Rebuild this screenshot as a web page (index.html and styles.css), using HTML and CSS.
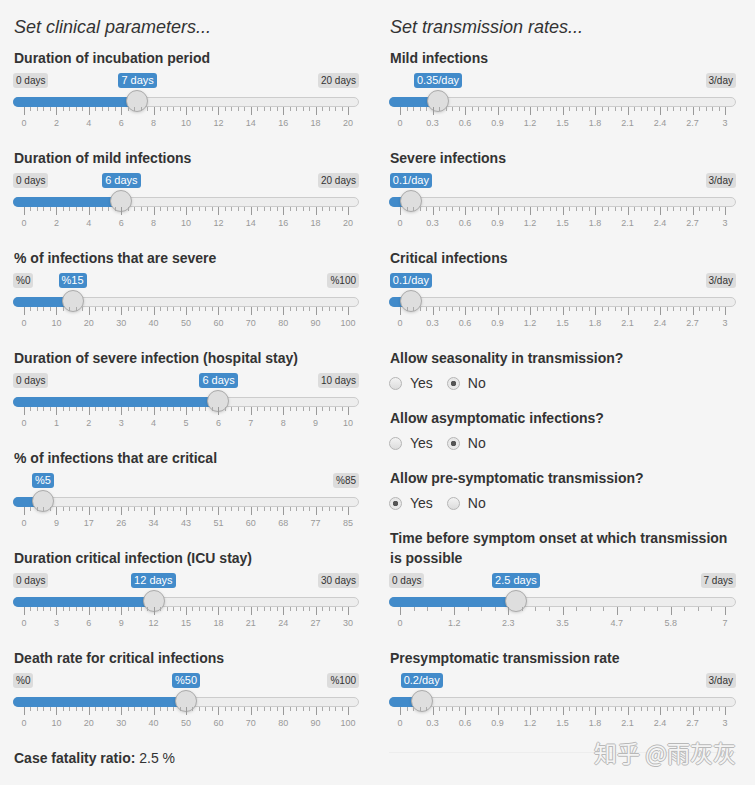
FILE: index.html
```html
<!DOCTYPE html>
<html lang="en">
<head>
    <meta charset="UTF-8">
    <title>Model parameters</title>
    <link rel="stylesheet" href="styles.css">
</head>
<body>

<div class="page">
    <!-- Clinical parameters -->
    <div class="col">
        <h4 class="col-title">Set clinical parameters...</h4>

        <div class="field">
            <label class="field-label">Duration of incubation period</label>
            <div class="irs" data-min="0" data-max="20" data-value="7" data-postfix=" days" data-grid="0,2,4,6,8,10,12,14,16,18,20"></div>
        </div>
        <div class="field">
            <label class="field-label">Duration of mild infections</label>
            <div class="irs" data-min="0" data-max="20" data-value="6" data-postfix=" days" data-grid="0,2,4,6,8,10,12,14,16,18,20"></div>
        </div>
        <div class="field">
            <label class="field-label">% of infections that are severe</label>
            <div class="irs" data-min="0" data-max="100" data-value="15" data-prefix="%" data-grid="0,10,20,30,40,50,60,70,80,90,100"></div>
        </div>
        <div class="field">
            <label class="field-label">Duration of severe infection (hospital stay)</label>
            <div class="irs" data-min="0" data-max="10" data-value="6" data-postfix=" days" data-grid="0,1,2,3,4,5,6,7,8,9,10"></div>
        </div>
        <div class="field">
            <label class="field-label">% of infections that are critical</label>
            <div class="irs" data-min="0" data-max="85" data-value="5" data-prefix="%" data-grid="0,9,17,26,34,43,51,60,68,77,85"></div>
        </div>
        <div class="field">
            <label class="field-label">Duration critical infection (ICU stay)</label>
            <div class="irs" data-min="0" data-max="30" data-value="12" data-postfix=" days" data-grid="0,3,6,9,12,15,18,21,24,27,30"></div>
        </div>
        <div class="field">
            <label class="field-label">Death rate for critical infections</label>
            <div class="irs" data-min="0" data-max="100" data-value="50" data-prefix="%" data-grid="0,10,20,30,40,50,60,70,80,90,100"></div>
        </div>

        <div class="cfr"><b>Case fatality ratio:</b> 2.5 %</div>
    </div>

    <!-- Transmission rates -->
    <div class="col">
        <h4 class="col-title">Set transmission rates...</h4>

        <div class="field">
            <label class="field-label">Mild infections</label>
            <div class="irs" data-min="0" data-max="3" data-value="0.35" data-postfix="/day" data-grid="0,0.3,0.6,0.9,1.2,1.5,1.8,2.1,2.4,2.7,3"></div>
        </div>
        <div class="field">
            <label class="field-label">Severe infections</label>
            <div class="irs" data-min="0" data-max="3" data-value="0.1" data-postfix="/day" data-grid="0,0.3,0.6,0.9,1.2,1.5,1.8,2.1,2.4,2.7,3"></div>
        </div>
        <div class="field">
            <label class="field-label">Critical infections</label>
            <div class="irs" data-min="0" data-max="3" data-value="0.1" data-postfix="/day" data-grid="0,0.3,0.6,0.9,1.2,1.5,1.8,2.1,2.4,2.7,3"></div>
        </div>

        <div class="field-radio">
            <label class="field-label">Allow seasonality in transmission?</label>
            <div class="radios">
                <span class="radio"></span><span class="radio-text">Yes</span>
                <span class="radio checked"></span><span class="radio-text">No</span>
            </div>
        </div>
        <div class="field-radio">
            <label class="field-label">Allow asymptomatic infections?</label>
            <div class="radios">
                <span class="radio"></span><span class="radio-text">Yes</span>
                <span class="radio checked"></span><span class="radio-text">No</span>
            </div>
        </div>
        <div class="field-radio">
            <label class="field-label">Allow pre-symptomatic transmission?</label>
            <div class="radios">
                <span class="radio checked"></span><span class="radio-text">Yes</span>
                <span class="radio"></span><span class="radio-text">No</span>
            </div>
        </div>

        <div class="field">
            <label class="field-label">Time before symptom onset at which transmission is possible</label>
            <div class="irs" data-min="0" data-max="7" data-value="2.5" data-postfix=" days" data-small="3" data-grid="0,1.2,2.3,3.5,4.7,5.8,7"></div>
        </div>
        <div class="field">
            <label class="field-label">Presymptomatic transmission rate</label>
            <div class="irs" data-min="0" data-max="3" data-value="0.2" data-postfix="/day" data-grid="0,0.3,0.6,0.9,1.2,1.5,1.8,2.1,2.4,2.7,3"></div>
        </div>

        <hr class="sep">
    </div>

    <div class="watermark">知乎 @雨灰灰</div>
</div>

<script>
// build the range sliders from their data attributes
document.querySelectorAll('.irs').forEach(function (el) {
    var min = +el.dataset.min;
    var max = +el.dataset.max;
    var val = +el.dataset.value;
    var pre = el.dataset.prefix || '';
    var post = el.dataset.postfix || '';
    var grid = el.dataset.grid.split(',');
    var small = el.dataset.small ? +el.dataset.small : 4;

    var w = el.clientWidth;
    var rail = w - 22;
    var x = 11 + (val - min) / (max - min) * rail;

    var html = '<span class="irs-line"></span>';
    html += '<span class="irs-bar" style="width:' + x + 'px"></span>';
    html += '<span class="irs-min">' + pre + min + post + '</span>';
    html += '<span class="irs-max">' + pre + max + post + '</span>';
    html += '<span class="irs-single">' + pre + val + post + '</span>';
    html += '<span class="irs-handle" style="left:' + (x - 11) + 'px"></span>';

    var n = grid.length - 1;
    var step = rail / n;
    html += '<span class="irs-grid">';
    for (var i = 0; i <= n; i++) {
        var gx = 11 + i * step;
        html += '<span class="irs-pol" style="left:' + gx + 'px"></span>';
        if (i < n) {
            for (var z = 1; z <= small; z++) {
                html += '<span class="irs-pol small" style="left:' + (gx + z * step / (small + 1)) + 'px"></span>';
            }
        }
        html += '<span class="irs-grid-text" style="left:' + gx + 'px">' + grid[i] + '</span>';
    }
    html += '</span>';
    el.innerHTML = html;

    // centre the value label on the handle, keep it inside the slider
    var single = el.querySelector('.irs-single');
    var sw = single.offsetWidth;
    var left = Math.max(0, Math.min(w - sw, x - sw / 2));
    single.style.left = left + 'px';

    var minLabel = el.querySelector('.irs-min');
    var maxLabel = el.querySelector('.irs-max');
    if (left < minLabel.offsetWidth + 3) minLabel.style.visibility = 'hidden';
    if (left + sw > w - maxLabel.offsetWidth - 3) maxLabel.style.visibility = 'hidden';
});
</script>

</body>
</html>
```

FILE: styles.css
```css
body {
    margin: 0;
    background-color: #f5f5f5;
    font-family: "Liberation Sans", Arial, sans-serif;
    font-size: 14px;
    line-height: 20px;
    color: #333;
}
.page {
    position: relative;
    display: grid;
    grid-template-columns: 346px 347px;
    column-gap: 30px;
    padding: 17px 0 0 13px;
    height: 785px;
    box-sizing: border-box;
    overflow: hidden;
}
.col-title {
    margin: 0 0 11px 1px;
    font-size: 18px;
    font-weight: normal;
    font-style: italic;
    line-height: 20px;
}
.field-label {
    display: block;
    margin-left: 1px;
    font-weight: bold;
}
.field {
    margin-bottom: 20px;
}

/* range slider */
.irs {
    position: relative;
    height: 58px;
    margin-top: 2px;
}
.irs-line {
    position: absolute;
    left: 0;
    right: 0;
    top: 27px;
    height: 8px;
    background-color: #ededed;
    border: 1px solid #cccccc;
    border-radius: 8px;
}
.irs-bar {
    position: absolute;
    left: 0;
    top: 27px;
    height: 10px;
    background-color: #428bca;
    border-radius: 8px 0 0 8px;
}
.irs-handle {
    position: absolute;
    top: 20px;
    width: 22px;
    height: 22px;
    box-sizing: border-box;
    background-color: #dedede;
    border: 1px solid #ababab;
    border-radius: 50%;
    box-shadow: 0 1px 3px rgba(0, 0, 0, 0.15);
}
.irs-min, .irs-max, .irs-single {
    position: absolute;
    top: 3px;
    padding: 1px 3px;
    border-radius: 3px;
    line-height: 13px;
    white-space: nowrap;
}
.irs-min, .irs-max {
    font-size: 10px;
    color: #333;
    background-color: rgba(0, 0, 0, 0.1);
}
.irs-min {
    left: 0;
}
.irs-max {
    right: 0;
}
.irs-single {
    font-size: 11px;
    color: #fff;
    background-color: #428bca;
}
.irs-grid {
    position: absolute;
    left: 0;
    right: 0;
    top: 37px;
    height: 20px;
}
.irs-pol {
    position: absolute;
    top: 0;
    width: 1px;
    height: 8px;
    background-color: #999;
}
.irs-pol.small {
    height: 4px;
    background-color: #aaa;
}
.irs-grid-text {
    position: absolute;
    top: 12px;
    transform: translateX(-50%);
    font-size: 9px;
    line-height: 9px;
    color: #999;
    white-space: nowrap;
}

/* radio groups */
.field-radio {
    margin-bottom: 15px;
}
.radios {
    display: flex;
    align-items: center;
    margin-top: 5px;
    height: 20px;
}
.radio {
    width: 13px;
    height: 13px;
    box-sizing: border-box;
    margin-right: 8px;
    border: 1px solid #b5b5b5;
    border-radius: 50%;
    background: linear-gradient(#f3f3f3, #dcdcdc);
}
.radio.checked {
    background: radial-gradient(circle, #555 0, #555 2.5px, #e8e8e8 3px);
}
.radio-text {
    margin-right: 14px;
}

.cfr {
    line-height: 20px;
    margin-left: 1px;
}
.sep {
    margin: 24px 0 0 0;
    border: 0;
    border-top: 1px solid #ededed;
}
.watermark {
    position: absolute;
    left: 594px;
    top: 738px;
    font-family: "Noto Sans CJK SC", sans-serif;
    font-size: 23px;
    line-height: 28px;
    color: #f4f4f4;
    text-shadow: 1px 0 0 #b8b8b8, -1px 0 0 #b8b8b8, 0 1px 0 #b8b8b8, 0 -1px 0 #b8b8b8;
}
```
